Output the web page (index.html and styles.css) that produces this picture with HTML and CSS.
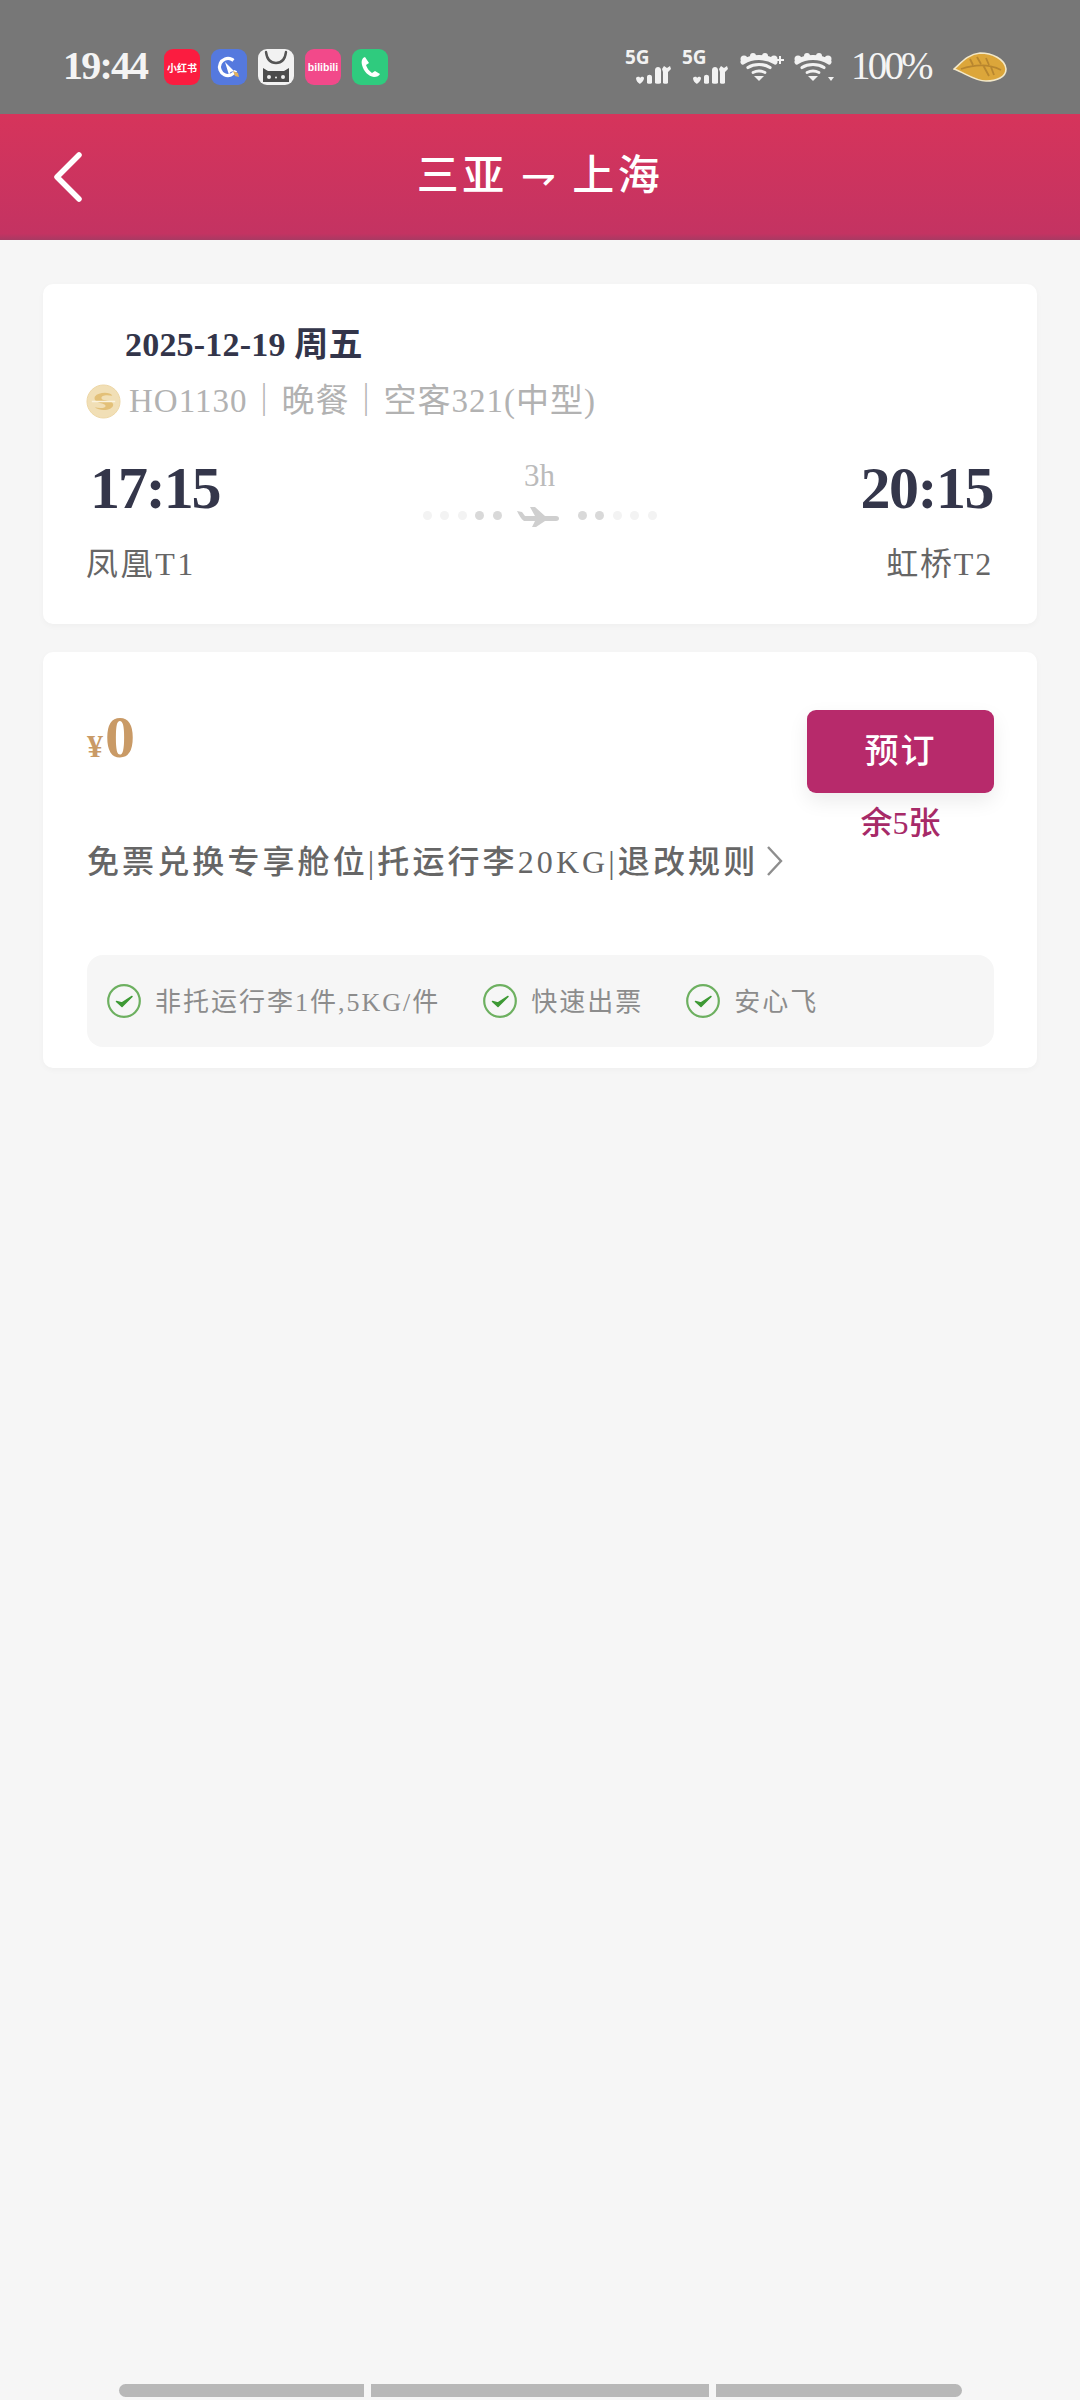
FILE: index.html
```html
<!DOCTYPE html>
<html lang="zh-CN">
<head>
<meta charset="utf-8">
<title>三亚 - 上海</title>
<link rel="stylesheet" href="styles.css">
</head>
<body>
<div class="page">
  <div class="status">
    <span class="clock">19:44</span>
    <div class="apps">
      <span class="app app-red">小红书</span>
      <span class="app app-blue">
        <svg viewBox="0 0 36 36" class="fill"><circle cx="17" cy="18" r="8.5" fill="none" stroke="#fff" stroke-width="3.2" stroke-dasharray="42 12" transform="rotate(25 17 18)"/><path d="M14 13l9 9-3.500 1-1.500 3z" fill="#fff"/><path d="M22 22l5 2 1 4-4-1z" fill="#e0b060"/></svg>
      </span>
      <span class="app app-white">
        <svg viewBox="0 0 36 36" class="fill"><path d="M8 3c1 8 5 11 10 11s9-3 10-11" fill="none" stroke="#555" stroke-width="2.4" stroke-linecap="round"/><path d="M5 33V19l5 3h16l5-3v14z" fill="#4c4c4c"/><circle cx="11" cy="28" r="2" fill="#eee"/><circle cx="18" cy="28.500" r="1" fill="#eee"/><circle cx="25" cy="28" r="2" fill="#eee"/></svg>
      </span>
      <span class="app app-pink">bilibili</span>
      <span class="app app-green">
        <svg viewBox="0 0 36 36" class="fill"><path d="M13 8c-3 1-4 4-3 8 2 7 6 11 12 12 3 0 5-1 6-3l-5-3-3 2c-3-2-5-5-6-8l3-2z" fill="#fff"/></svg>
      </span>
    </div>
    <div class="sys">
      <div class="net">
        <span class="net-label">5G</span>
        <svg class="bars" viewBox="0 0 36 18"><path d="M0 12c2-2 4-1 4 0 1-1 3-2 4 0 0 3-3 5-4 6-2-1-4-3-4-6zM11 11c0-3 5-3 5 0v6c0 1-5 1-5 0zM19 4c0-4 6-4 6 0v13c0 1-6 1-6 0zM28 0l3 2 3-2 1 3-3 3v11c0 1-5 1-5 0V6l-1-3z" fill="#f2f2f2"/></svg>
      </div>
      <div class="net net-second">
        <span class="net-label">5G</span>
        <svg class="bars" viewBox="0 0 36 18"><path d="M0 12c2-2 4-1 4 0 1-1 3-2 4 0 0 3-3 5-4 6-2-1-4-3-4-6zM11 11c0-3 5-3 5 0v6c0 1-5 1-5 0zM19 4c0-4 6-4 6 0v13c0 1-6 1-6 0zM28 0l3 2 3-2 1 3-3 3v11c0 1-5 1-5 0V6l-1-3z" fill="#f2f2f2"/></svg>
      </div>
      <svg class="wifi" viewBox="0 0 44 28"><g fill="none" stroke="#f2f2f2" stroke-linecap="round"><path d="M3 9c9-6 23-6 32 0" stroke-width="5"/><path d="M8 14.500c6-4 16-4 22 0" stroke-width="3.200"/><path d="M13 19.500c4-2 8-2 12 0" stroke-width="2.800"/></g><path d="M14 23h10l-5 5z" fill="#f2f2f2"/><circle cx="4" cy="6" r="3.500" fill="#f2f2f2"/><circle cx="34" cy="6" r="3.500" fill="#f2f2f2"/><circle cx="13" cy="3" r="3" fill="#f2f2f2"/><circle cx="25" cy="3" r="3" fill="#f2f2f2"/><path d="M36 7h8M40 3v8" stroke="#f2f2f2" stroke-width="2"/></svg>
      <svg class="wifi wifi-b" viewBox="0 0 40 28"><g fill="none" stroke="#f2f2f2" stroke-linecap="round"><path d="M3 9c9-6 23-6 32 0" stroke-width="5"/><path d="M8 14.500c6-4 16-4 22 0" stroke-width="3.200"/><path d="M13 19.500c4-2 8-2 12 0" stroke-width="2.800"/></g><path d="M14 23h10l-5 5z" fill="#f2f2f2"/><circle cx="4" cy="6" r="3.500" fill="#f2f2f2"/><circle cx="34" cy="6" r="3.500" fill="#f2f2f2"/><circle cx="13" cy="3" r="3" fill="#f2f2f2"/><circle cx="25" cy="3" r="3" fill="#f2f2f2"/><path d="M34 24h6l-3 4z" fill="#f2f2f2"/></svg>
      <span class="battery">100%</span>
      <svg class="leaf" viewBox="0 0 54 30"><path d="M1 17C8 11 15 2 27 1c12 0 25 6 26 16 0 8-9 12-20 12C22 29 12 21 1 17z" fill="#dca63a" stroke="#f3e8c8" stroke-width="1.600"/><path d="M8 17c12-4 26-6 40 1M20 13l-3-6M28 12l-4-7M36 13l-3-7M30 13l6 11M38 15l3 8" fill="none" stroke="#b8862f" stroke-width="1.800"/></svg>
    </div>
  </div>

  <header class="nav">
    <svg class="back" viewBox="0 0 28 50"><path d="M25 3L3 25l22 22" fill="none" stroke="#fff" stroke-width="5.500" stroke-linecap="round" stroke-linejoin="round"/></svg>
    <h1 class="nav-title">三亚 <span class="harpoon">⇁</span> 上海</h1>
  </header>

  <main class="content">
    <section class="card flight">
      <div class="date">2025-12-19 周五</div>
      <div class="flight-info">
        <svg class="airline" viewBox="0 0 36 36"><circle cx="18" cy="18" r="17" fill="#f1dfb6" stroke="#ecd6a4" stroke-width="1"/><path d="M9 13c4-5 16-5 18-1-5-1-12-1-11 3 1 3 11 1 12 6 0 6-13 8-19 3 5 1 12 1 11-2-1-3-13-2-11-9z" fill="#e3c078"/><path d="M6 18h24" stroke="#fbf3df" stroke-width="1.500"/></svg>
        <span class="flight-text">HO1130｜晚餐｜空客321(中型)</span>
      </div>
      <div class="route">
        <div class="stop">
          <div class="time">17:15</div>
          <div class="terminal">凤凰T1</div>
        </div>
        <div class="track">
          <div class="duration">3h</div>
          <div class="line">
            <span class="dot d1"></span><span class="dot d1"></span><span class="dot d1"></span><span class="dot d2"></span><span class="dot d2"></span>
            <svg class="plane" viewBox="0 0 42 20"><path d="M0 4l5 1 3 4h10L13 0h5l10 9h11c4 0 4 5 0 5H28l-9 6h-4l3-6H7C4 12 2 8 0 4z" fill="#cfcfcf"/></svg>
            <span class="dot d2"></span><span class="dot d2"></span><span class="dot d1"></span><span class="dot d1"></span><span class="dot d1"></span>
          </div>
        </div>
        <div class="stop stop-end">
          <div class="time">20:15</div>
          <div class="terminal">虹桥T2</div>
        </div>
      </div>
    </section>

    <section class="card fare">
      <div class="fare-top">
        <div class="price"><span class="yen">¥</span><span class="amount">0</span></div>
        <div class="action">
          <button class="book" type="button">预订</button>
          <div class="stock">余5张</div>
        </div>
      </div>
      <div class="rules">
        <span class="rules-text">免票兑换专享舱位|托运行李20KG|退改规则</span>
        <svg class="more" viewBox="0 0 17 32"><path d="M2 2l13 14L2 30" fill="none" stroke="#8e8e8e" stroke-width="2.400"/></svg>
      </div>
      <ul class="perks">
        <li class="perk">
          <svg class="check" viewBox="0 0 34 34"><circle cx="17" cy="17" r="15.800" fill="none" stroke="#6db060" stroke-width="2.200"/><path d="M9.500 17.500l5.500 5 10-10-10 6.500z" fill="#3e9a35" stroke="#3e9a35" stroke-width="1.500" stroke-linejoin="round"/></svg>
          <span class="perk-text">非托运行李1件,5KG/件</span>
        </li>
        <li class="perk">
          <svg class="check" viewBox="0 0 34 34"><circle cx="17" cy="17" r="15.800" fill="none" stroke="#6db060" stroke-width="2.200"/><path d="M9.500 17.500l5.500 5 10-10-10 6.500z" fill="#3e9a35" stroke="#3e9a35" stroke-width="1.500" stroke-linejoin="round"/></svg>
          <span class="perk-text">快速出票</span>
        </li>
        <li class="perk">
          <svg class="check" viewBox="0 0 34 34"><circle cx="17" cy="17" r="15.800" fill="none" stroke="#6db060" stroke-width="2.200"/><path d="M9.500 17.500l5.500 5 10-10-10 6.500z" fill="#3e9a35" stroke="#3e9a35" stroke-width="1.500" stroke-linejoin="round"/></svg>
          <span class="perk-text">安心飞</span>
        </li>
      </ul>
    </section>
  </main>

  <div class="gesture">
    <span class="seg seg-a"></span><span class="seg seg-b"></span><span class="seg seg-c"></span>
  </div>
</div>
</body>
</html>
```
FILE: styles.css
```css
* { box-sizing: border-box; }
html, body { margin: 0; padding: 0; }
body {
  width: 1080px;
  height: 2400px;
  overflow: hidden;
  background: #f6f6f6;
  font-family: "Liberation Serif", "Noto Sans CJK SC", serif;
}
.page { width: 1080px; height: 2400px; display: flex; flex-direction: column; }

/* status bar */
.status {
  height: 114px;
  background: #777777;
  display: flex;
  align-items: center;
  padding: 20px 73px 0 63px;
  color: #f4f4f4;
  flex: none;
}
.clock { font-size: 40px; font-weight: bold; letter-spacing: -1.800px; width: 101px; margin-top: -4px; }
.apps { display: flex; gap: 11px; }
.app {
  width: 36px;
  height: 36px;
  border-radius: 9px;
  display: flex;
  align-items: center;
  justify-content: center;
  overflow: hidden;
  font-family: "Noto Sans CJK SC", sans-serif;
  font-size: 10px;
  font-weight: 700;
  color: #fff;
  white-space: nowrap;
}
.app-red { background: #fb1c40; }
.app-blue { background: #5579de; }
.app-white { background: #f2f2f2; }
.app-pink { background: #f2498a; font-family: "Liberation Sans", sans-serif; font-size: 10.500px; letter-spacing: 0; }
.app-green { background: #2fcb7e; }
.fill { width: 36px; height: 36px; display: block; }
.sys { display: flex; align-items: center; margin-left: auto; }
.net { width: 47px; height: 36px; position: relative; }
.net-second { margin-left: 10px; margin-right: 11px; }
.net-label {
  position: absolute;
  left: 0;
  top: -3px;
  font-family: "Open Sans", sans-serif;
  font-weight: 700;
  font-size: 19px;
  line-height: 22px;
  color: #f2f2f2;
}
.bars { position: absolute; left: 11px; top: 17px; width: 36px; height: 18px; }
.wifi { width: 44px; height: 28px; }
.wifi-b { width: 40px; margin-left: 10px; }
.battery { font-size: 39px; margin-left: 17px; letter-spacing: -2.800px; margin-top: -3px; width: 79px; white-space: nowrap; }
.leaf { width: 54px; height: 30px; margin-left: 23px; }

/* header */
.nav {
  height: 126px;
  flex: none;
  background: linear-gradient(180deg, #d6345b 0%, #c43362 95%, #a83a63 100%);
  position: relative;
  display: flex;
  align-items: center;
  justify-content: center;
}
.back { position: absolute; left: 54px; top: 38px; width: 28px; height: 50px; }
.nav-title {
  margin: 0;
  font-family: "Noto Sans CJK SC", sans-serif;
  font-size: 42px;
  font-weight: 500;
  color: #fff;
  line-height: 56px;
  letter-spacing: 3.500px;
  margin-top: -6px;
}
.harpoon { font-family: "DejaVu Sans", sans-serif; font-weight: 400; }

/* cards */
.content { padding: 44px 43px 0; display: flex; flex-direction: column; gap: 28px; }
.card { background: #fff; border-radius: 10px; box-shadow: 0 2px 6px rgba(0,0,0,0.03); }
.flight { height: 340px; padding: 40px 44px 0 43px; }
.date {
  padding-left: 39px;
  font-size: 34px;
  font-weight: bold;
  color: #33354a;
  line-height: 42px;
  letter-spacing: 0.200px;
}
.flight-info { display: flex; align-items: center; height: 38px; margin-top: 16px; }
.airline { width: 35px; height: 35px; flex: none; }
.flight-text { margin-left: 8px; font-size: 33px; color: #b2b2b2; letter-spacing: 1px; white-space: nowrap; line-height: 38px; }
.route { display: grid; grid-template-columns: 1fr 240px 1fr; margin-top: 39px; }
.time { font-size: 60px; font-weight: bold; line-height: 58px; color: #34364a; letter-spacing: -2.100px; margin-left: 4px; }
.terminal { margin-top: 27px; font-size: 32px; line-height: 40px; color: #666; letter-spacing: 2.600px; }
.stop-end { text-align: right; }
.stop-end .time { margin-left: 0; letter-spacing: -1.500px; }
.stop-end .terminal { letter-spacing: 1.800px; }
.track { display: flex; flex-direction: column; align-items: center; padding-top: 2px; }
.duration { font-size: 31px; line-height: 30px; color: #bbbbbb; }
.line { display: flex; align-items: center; margin-top: 16px; height: 20px; gap: 8.500px; white-space: nowrap; flex-wrap: nowrap; justify-content: center; width: 240px; }
.dot { width: 9px; height: 9px; border-radius: 50%; flex: none; margin-top: -3px; }
.d1 { background: #f3f3f3; }
.d2 { background: #d9d9d9; }
.plane { width: 42px; height: 20px; flex: none; margin: 0 10px 0 7px; }

.fare { height: 416px; padding: 58px 43px 0 44px; }
.fare-top { display: flex; justify-content: space-between; align-items: flex-start; }
.price { display: flex; align-items: baseline; color: #c99a66; font-weight: bold; line-height: 60px; margin-top: -3px; }
.yen { font-size: 32px; margin-right: 2px; }
.amount { font-size: 60px; }
.action { width: 187px; display: flex; flex-direction: column; align-items: center; }
.book {
  width: 187px;
  height: 83px;
  border: 0;
  border-radius: 9px;
  background: #b72a6b;
  color: #fff;
  font-family: "Noto Sans CJK SC", sans-serif;
  font-size: 34px;
  font-weight: 500;
  letter-spacing: 2px;
  box-shadow: 0 8px 20px rgba(0,0,0,0.08);
  padding: 0 0 6px;
}
.stock { margin-top: 13px; height: 34px; line-height: 34px; font-size: 32px; font-weight: 500; color: #a72a68; }
.rules { display: flex; align-items: center; height: 40px; margin-top: 1px; font-size: 32px; font-weight: 500; letter-spacing: 3.100px; color: #666; white-space: nowrap; }
.rules-text { margin-top: -5px; }
.more { width: 17px; height: 32px; margin-left: 8px; }
.perks {
  list-style: none;
  margin: 74px 0 0;
  padding: 0 0 0 20px;
  height: 92px;
  background: #f6f6f6;
  border-radius: 16px;
  display: flex;
  align-items: center;
  gap: 43px;
}
.perk { display: flex; align-items: center; gap: 14px; font-size: 26px; letter-spacing: 2px; color: #8c8c8c; white-space: nowrap; }
.perk-text { margin-top: -3px; }
.check { width: 34px; height: 34px; flex: none; }

/* gesture bar */
.gesture { margin-top: auto; height: 16px; padding-left: 119px; display: flex; gap: 7px; }
.seg { height: 13px; background: #b8b8b8; display: block; }
.seg-a { width: 245px; border-radius: 7px 0 0 7px; }
.seg-b { width: 338px; }
.seg-c { width: 246px; border-radius: 0 7px 7px 0; }
```
